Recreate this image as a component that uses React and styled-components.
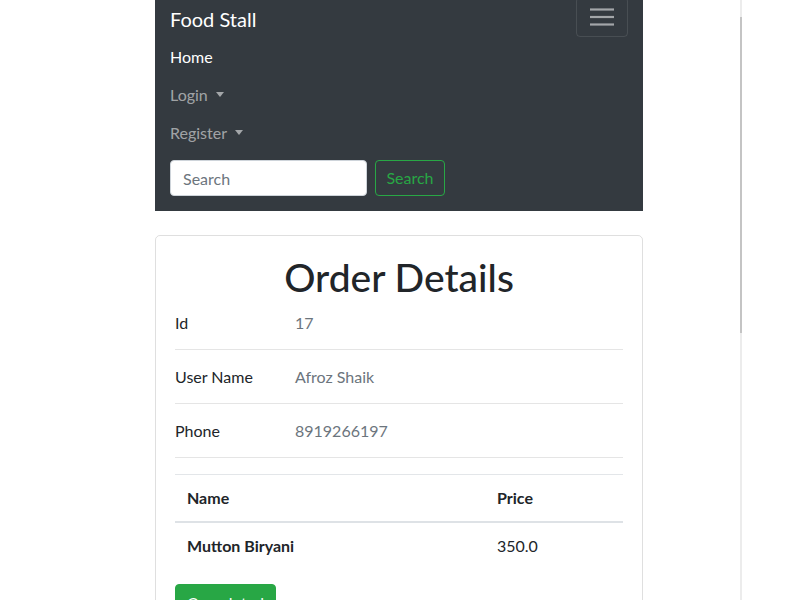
import React from 'react'
import styled, {createGlobalStyle} from 'styled-components'

const GlobalStyle = createGlobalStyle`
  body {
    margin: 0;
    background: #fff;
    color: #212529;
    font-family: 'Segoe UI', Lato, 'Noto Sans', sans-serif;
    font-size: 16px;
    line-height: 1.5;
  }
  * {
    box-sizing: border-box;
  }
`

const Container = styled.div`
  width: 488px;
  margin-left: 155px;
`

const Navbar = styled.nav`
  background: #343a40;
  padding: 0 15px 15px;
`

const NavTop = styled.div`
  display: flex;
  justify-content: space-between;
  align-items: flex-start;
  height: 38px;
`

const Brand = styled.a`
  color: #fff;
  font-size: 20px;
  line-height: 38px;
  text-decoration: none;
`

const Toggler = styled.button`
  width: 52px;
  height: 40px;
  margin-top: -3px;
  background: transparent;
  border: 1px solid rgba(255, 255, 255, 0.1);
  border-radius: 4px;
  display: flex;
  align-items: center;
  justify-content: center;
  padding: 0;
`

const NavList = styled.ul`
  list-style: none;
  margin: 0;
  padding: 0;
`

const NavLink = styled.a`
  display: block;
  padding: 7px 0;
  line-height: 24px;
  color: ${p => (p.active ? '#fff' : 'rgba(255, 255, 255, 0.55)')};
  text-decoration: none;

  ${p =>
    p.dropdown &&
    `
    &::after {
      content: '';
      display: inline-block;
      margin-left: 8px;
      vertical-align: 4px;
      border-top: 5px solid;
      border-left: 4.5px solid transparent;
      border-right: 4.5px solid transparent;
    }
  `}
`

const SearchForm = styled.form`
  display: flex;
  gap: 8px;
  margin-top: 8px;
`

const SearchInput = styled.input`
  width: 197px;
  height: 36px;
  padding: 0 12px;
  border: 1px solid #ced4da;
  border-radius: 4px;
  font: inherit;
  color: #495057;

  &::placeholder {
    color: #6c757d;
  }
`

const OutlineButton = styled.button`
  width: 70px;
  height: 36px;
  background: transparent;
  border: 1px solid #28a745;
  border-radius: 4px;
  color: #28a745;
  font: inherit;
  padding: 0;
`

const Card = styled.div`
  margin-top: 24px;
  border: 1px solid rgba(0, 0, 0, 0.125);
  border-radius: 5px;
  padding: 21px 19px 20px;
`

const Title = styled.h1`
  margin: 0;
  text-align: center;
  font-size: 39px;
  font-weight: 500;
  line-height: 40px;
`

const InfoRow = styled.div`
  display: grid;
  grid-template-columns: 120px 1fr;
  padding: ${p => (p.first ? '14px' : '15px')} 0 14px;
  border-bottom: 1px solid rgba(0, 0, 0, 0.1);
  line-height: 24px;
`

const Value = styled.span`
  color: #6c757d;
`

const Table = styled.table`
  width: 100%;
  margin-top: 16px;
  margin-bottom: 15px;
  border-collapse: collapse;

  th,
  td {
    padding: 11px 12px;
    text-align: left;
    line-height: 24px;
    border-top: 1px solid #e3e6e9;
  }

  th {
    font-weight: 700;
  }

  thead th {
    border-bottom: 2px solid #dee2e6;
  }
`

const NameCell = styled.td`
  width: 310px;
  font-weight: 700;
`

const SolidButton = styled.button`
  background: #28a745;
  border: 1px solid #28a745;
  border-radius: 4px;
  color: #fff;
  font: inherit;
  line-height: 24px;
  padding: 6px 11px;
`

const ScrollTrack = styled.div`
  position: fixed;
  top: 0;
  bottom: 0;
  left: 740px;
  width: 2px;
  background: #ececec;
`

const ScrollThumb = styled.div`
  margin-top: 17px;
  height: 316px;
  background: #c4c4c4;
`

const MenuIcon = () => (
  <svg width="24" height="18" viewBox="0 0 24 18">
    <g stroke="rgba(255,255,255,0.55)" strokeWidth="2.2">
      <line x1="0" y1="1.5" x2="24" y2="1.5" />
      <line x1="0" y1="9" x2="24" y2="9" />
      <line x1="0" y1="16.5" x2="24" y2="16.5" />
    </g>
  </svg>
)

const details = [
  {label: 'Id', value: '17'},
  {label: 'User Name', value: 'Afroz Shaik'},
  {label: 'Phone', value: '8919266197'}
]

const items = [{name: 'Mutton Biryani', price: '350.0'}]

export default function App() {
  return (
    <>
      <GlobalStyle />
      <Container>
        <Navbar>
          <NavTop>
            <Brand href="#">Food Stall</Brand>
            <Toggler type="button">
              <MenuIcon />
            </Toggler>
          </NavTop>
          <NavList>
            <li>
              <NavLink href="#" active>
                Home
              </NavLink>
            </li>
            <li>
              <NavLink href="#" dropdown>
                Login
              </NavLink>
            </li>
            <li>
              <NavLink href="#" dropdown>
                Register
              </NavLink>
            </li>
          </NavList>
          <SearchForm onSubmit={e => e.preventDefault()}>
            <SearchInput placeholder="Search" />
            <OutlineButton type="submit">Search</OutlineButton>
          </SearchForm>
        </Navbar>

        <Card>
          <Title>Order Details</Title>
          {details.map((d, i) => (
            <InfoRow key={d.label} first={i === 0}>
              <span>{d.label}</span>
              <Value>{d.value}</Value>
            </InfoRow>
          ))}
          <Table>
            <thead>
              <tr>
                <th>Name</th>
                <th>Price</th>
              </tr>
            </thead>
            <tbody>
              {items.map(item => (
                <tr key={item.name}>
                  <NameCell>{item.name}</NameCell>
                  <td>{item.price}</td>
                </tr>
              ))}
            </tbody>
          </Table>
          <SolidButton type="button">Completed</SolidButton>
        </Card>
      </Container>
      <ScrollTrack>
        <ScrollThumb />
      </ScrollTrack>
    </>
  )
}
